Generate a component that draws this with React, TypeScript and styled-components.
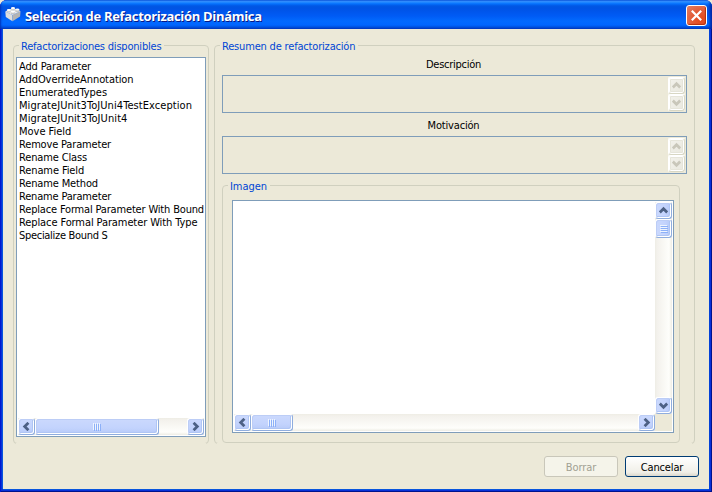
import React from 'react';
import styled, { createGlobalStyle, css } from 'styled-components';

const GlobalStyle = createGlobalStyle`
  *, *::before, *::after { box-sizing: border-box; }
  body {
    margin: 0;
    background: #ece9d8;
    font: 11px/13px 'DejaVu Sans Condensed', 'DejaVu Sans', sans-serif;
    font-stretch: condensed;
    color: #000;
    overflow: hidden;
  }
`;

const Window = styled.div`
  width: 712px;
  height: 492px;
  display: flex;
  flex-direction: column;
  border-radius: 7px 7px 0 0;
  overflow: hidden;
  background: #0831d9;
  box-shadow: inset 1px 0 0 #0019cf, inset -1px -1px 0 #00138c;
`;

const TitleBar = styled.header`
  flex: 0 0 29px;
  display: flex;
  align-items: center;
  padding: 2px 5px 0;
  background: linear-gradient(
    to bottom,
    #0058e6 0, #3a93ff 1px, #288eff 2px, #127dff 3px, #036ffc 4px, #0262ee 5px,
    #0057e5 6px, #0054e3 8px, #0055eb 11px, #005bf5 16px, #026afe 21px,
    #0066ff 25px, #005df0 26px, #0048d0 28px, #003dc0 29px
  );
  box-shadow: inset 2px 0 2px -1px #0031b8, inset -3px 0 3px -1px #0024a0;

  > svg {
    margin-bottom: 3px;
  }
`;

const Title = styled.h1`
  flex: 1;
  margin: 2px 0 0 4px;
  font: bold 13px/17px 'Open Sans', 'Noto Sans', sans-serif;
  letter-spacing: -0.32px;
  color: #fff;
  text-shadow: 1px 1px 0 #0a1883;
  white-space: nowrap;
`;

const CloseButton = styled.button`
  width: 21px;
  height: 21px;
  padding: 0;
  display: grid;
  place-items: center;
  border: 1px solid #fff;
  border-radius: 3px;
  background: radial-gradient(circle at 75% 75%, #e5481a 0, #e25a35 45%, #e08065 100%);
  box-shadow: inset -1px -1px 1px #b5300c;
`;

const Body = styled.main`
  flex: 1;
  margin: 0 3px 3px;
  padding: 16px 10px 0;
  background: #ece9d8;
  box-shadow: 0 1px 0 #0855dd, -1px 0 0 #0855dd, 1px 0 0 #0441d8;
`;

const Columns = styled.div`
  display: flex;
  gap: 5px;
`;

const GroupFrame = styled.section<{ $w: number; $h: number; $pad: string; $open?: boolean }>`
  position: relative;
  width: ${p => p.$w}px;
  height: ${p => p.$h}px;
  padding: ${p => p.$pad};
  border: 1px solid #d0d0bf;
  border-radius: 4px;
  ${p => p.$open && css`
    &::after {
      content: '';
      position: absolute;
      left: 2px;
      right: 2px;
      bottom: -1px;
      height: 1px;
      background: #ece9d8;
    }
  `}
`;

const Tracked = styled.span<{ $track: number }>`
  letter-spacing: ${p => p.$track}px;
  white-space: nowrap;
`;

const Legend = styled.h2`
  position: absolute;
  top: -6px;
  left: 5px;
  margin: 0;
  padding: 0 3px 0 2px;
  font: inherit;
  color: #0046d5;
  background: #ece9d8;
`;

const Sunken = styled.div<{ $white?: boolean; $h: number }>`
  display: flex;
  height: ${p => p.$h}px;
  padding: 1px;
  border: 1px solid #7f9db9;
  background: ${p => (p.$white ? '#fff' : '#ece9d8')};
`;

const ListBox = styled(Sunken)`
  flex-direction: column;
`;

const List = styled.ul`
  flex: 1;
  margin: 0;
  padding: 1px 0 0 1px;
  list-style: none;
  overflow: hidden;
`;

const Item = styled.li`
  height: 13px;
`;

const Summary = styled.div`
  width: 465px;
  display: flex;
  flex-direction: column;
`;

const FieldLabel = styled.label<{ $first?: boolean }>`
  margin: ${p => (p.$first ? 0 : 6)}px 2px 4px 0;
  text-align: center;
`;

const Text = styled.div`
  flex: 1;
`;

const ImageGroup = styled.div`
  margin-top: 11px;
`;

const ImageView = styled(Sunken)`
  display: grid;
  grid-template: 1fr 17px / 1fr 17px;
`;

const Corner = styled.div`
  background: #ece9d8;
`;

const Bar = styled.div<{ $vertical?: boolean; $disabled?: boolean }>`
  display: flex;
  flex-direction: ${p => (p.$vertical ? 'column' : 'row')};
  flex: 0 0 17px;
  background: ${p => p.$disabled ? '#f5f4ea'
    : `linear-gradient(to ${p.$vertical ? 'right' : 'bottom'}, #eeede5, #f3f1ec 2px, #fefefb 14px, #eeede5)`};
`;

const Track = styled.div`
  flex: 1;
`;

const Piece = styled.div<{ $disabled?: boolean; $vertical?: boolean; $size?: number }>`
  flex: 0 0 ${p => p.$size ?? 17}px;
  display: grid;
  place-items: center;
  border: 1px solid;
  border-radius: 3px;
  ${p => p.$disabled ? css`
    color: #c9c7ba;
    border-color: #fff #d8d7c4 #d8d7c4 #fff;
    background: linear-gradient(135deg, #f3f2ec, #e9e8de);
    box-shadow: inset 0 0 0 1px #fff, inset 0 0 0 2px #e6e5da;
  ` : css`
    color: #4d6185;
    border-color: #fff #8fadde #8fadde #fff;
    background: linear-gradient(${p.$vertical ? '90deg' : '180deg'}, #cbd9fd, #c3d3fd 60%, #b5c9f7);
    box-shadow: inset -1px -1px 0 #fff, inset 1px 1px 0 #bccdf6, inset -2px -2px 0 #afc5f4;
  `}
`;

const Footer = styled.footer`
  display: flex;
  justify-content: flex-end;
  gap: 7px;
  padding-top: 12px;
`;

const PushButton = styled.button`
  width: 74px;
  height: 21px;
  padding: 1px 0 0;
  font: inherit;
  border: 1px solid #003c74;
  border-radius: 3px;
  color: #000;
  background: linear-gradient(#fff, #f6f5f0 50%, #f0efe8 80%, #dcd8cc);
  &:disabled {
    color: #a1a192;
    border-color: #c9c7ba;
    background: #f5f4ea;
  }
`;

type Dir = 'up' | 'down' | 'left' | 'right';

const chevrons: Record<Dir, string> = {
  up: 'M0.8 6.4 4.5 2.7 8.2 6.4',
  down: 'M0.8 2.6 4.5 6.3 8.2 2.6',
  left: 'M6.4 0.8 2.7 4.5 6.4 8.2',
  right: 'M2.6 0.8 6.3 4.5 2.6 8.2',
};

const Chevron = ({ dir }: { dir: Dir }) => (
  <svg width="9" height="9" viewBox="0 0 9 9" fill="none" stroke="currentColor" strokeWidth="2.8">
    <path d={chevrons[dir]} />
  </svg>
);

const Grip = ({ vertical }: { vertical?: boolean }) => (
  <svg width="8" height="8" viewBox="0 0 8 8" shapeRendering="crispEdges">
    {[0, 2, 4, 6].map(i => vertical ? (
      <g key={i}>
        <rect x="0" y={i} width="7" height="1" fill="#eef4fe" />
        <rect x="1" y={i + 1} width="7" height="1" fill="#8cb0f8" />
      </g>
    ) : (
      <g key={i}>
        <rect x={i} y="0" width="1" height="7" fill="#eef4fe" />
        <rect x={i + 1} y="1" width="1" height="7" fill="#8cb0f8" />
      </g>
    ))}
  </svg>
);

const ScrollBar = ({ vertical, disabled, thumb }: { vertical?: boolean; disabled?: boolean; thumb?: number }) => (
  <Bar $vertical={vertical} $disabled={disabled}>
    <Piece $disabled={disabled} $vertical={vertical}><Chevron dir={vertical ? 'up' : 'left'} /></Piece>
    {thumb && <Piece $size={thumb} $vertical={vertical}><Grip vertical={vertical} /></Piece>}
    <Track />
    <Piece $disabled={disabled} $vertical={vertical}><Chevron dir={vertical ? 'down' : 'right'} /></Piece>
  </Bar>
);

const Brick = () => (
  <svg width="16" height="16" viewBox="0 0 16 16">
    <path d="M0.3 5.5 7.5 9v6.2L0.8 11z" fill="#dedede" />
    <path d="M7.5 9l8-3.8-.4 5.3-7.6 4.7z" fill="#b4b4b4" />
    <path d="M0.3 5.5 8.2 2l7.3 3.2L7.5 9z" fill="#ececec" />
    <path d="M6 1.9v2.2c0 1 4 1 4 0V1.9z" fill="#cfcfcf" />
    <ellipse cx="8" cy="1.9" rx="2" ry="1" fill="#fff" />
    <path d="M1.8 4v1.8c0 1.1 4 1.1 4 0V4z" fill="#cdcdcd" />
    <ellipse cx="3.8" cy="4" rx="2" ry="1" fill="#fff" />
    <path d="M10.4 3.6v1.9c0 1.1 4 1.1 4 0V3.6z" fill="#c4c4c4" />
    <ellipse cx="12.4" cy="3.6" rx="2" ry="1" fill="#fafafa" />
    <path d="M5.8 5.8v1.8c0 1.1 4.2 1.1 4.2 0V5.8z" fill="#c6c6c6" />
    <ellipse cx="7.9" cy="5.8" rx="2.1" ry="1" fill="#fff" />
  </svg>
);

const items: [string, number][] = [
  ['Add Parameter', -0.13],
  ['AddOverrideAnnotation', -0.08],
  ['EnumeratedTypes', -0.04],
  ['MigrateJUnit3ToJUni4TestException', 0.07],
  ['MigrateJUnit3ToJUnit4', 0.09],
  ['Move Field', -0.02],
  ['Remove Parameter', -0.17],
  ['Rename Class', -0.14],
  ['Rename Field', -0.11],
  ['Rename Method', -0.14],
  ['Rename Parameter', -0.18],
  ['Replace Formal Parameter With Bound', -0.17],
  ['Replace Formal Parameter With Type', -0.1],
  ['Specialize Bound S', -0.3],
];

export default function App() {
  return (
    <>
      <GlobalStyle />
      <Window>
        <TitleBar>
          <Brick />
          <Title>Selección de Refactorización Dinámica</Title>
          <CloseButton aria-label="Cerrar">
            <svg width="11" height="11" viewBox="0 0 11 11" stroke="#fff" strokeWidth="2.2">
              <path d="M0.8 0.8 10.2 10.2M10.2 0.8 0.8 10.2" />
            </svg>
          </CloseButton>
        </TitleBar>
        <Body>
          <Columns>
            <GroupFrame $w={196} $h={399} $pad="11px 2px 0" $open>
              <Legend><Tracked $track={-0.2}>Refactorizaciones disponibles</Tracked></Legend>
              <ListBox $white $h={380}>
                <List>
                  {items.map(([name, track]) => (
                    <Item key={name}><Tracked $track={track}>{name}</Tracked></Item>
                  ))}
                </List>
                <ScrollBar thumb={124} />
              </ListBox>
            </GroupFrame>
            <GroupFrame $w={481} $h={399} $pad="12px 7px 0" $open>
              <Legend><Tracked $track={-0.18}>Resumen de refactorización</Tracked></Legend>
              <Summary>
                <FieldLabel $first><Tracked $track={-0.26}>Descripción</Tracked></FieldLabel>
                <Sunken $h={38}><Text /><ScrollBar vertical disabled /></Sunken>
                <FieldLabel><Tracked $track={-0.17}>Motivación</Tracked></FieldLabel>
                <Sunken $h={38}><Text /><ScrollBar vertical disabled /></Sunken>
                <ImageGroup>
                  <GroupFrame $w={458} $h={258} $pad="14px 5px 0 9px">
                    <Legend><Tracked $track={-0.05}>Imagen</Tracked></Legend>
                    <ImageView $white $h={233}>
                      <Text />
                      <ScrollBar vertical thumb={19} />
                      <ScrollBar thumb={42} />
                      <Corner />
                    </ImageView>
                  </GroupFrame>
                </ImageGroup>
              </Summary>
            </GroupFrame>
          </Columns>
          <Footer>
            <PushButton disabled><Tracked $track={-0.07}>Borrar</Tracked></PushButton>
            <PushButton><Tracked $track={-0.15}>Cancelar</Tracked></PushButton>
          </Footer>
        </Body>
      </Window>
    </>
  );
}
